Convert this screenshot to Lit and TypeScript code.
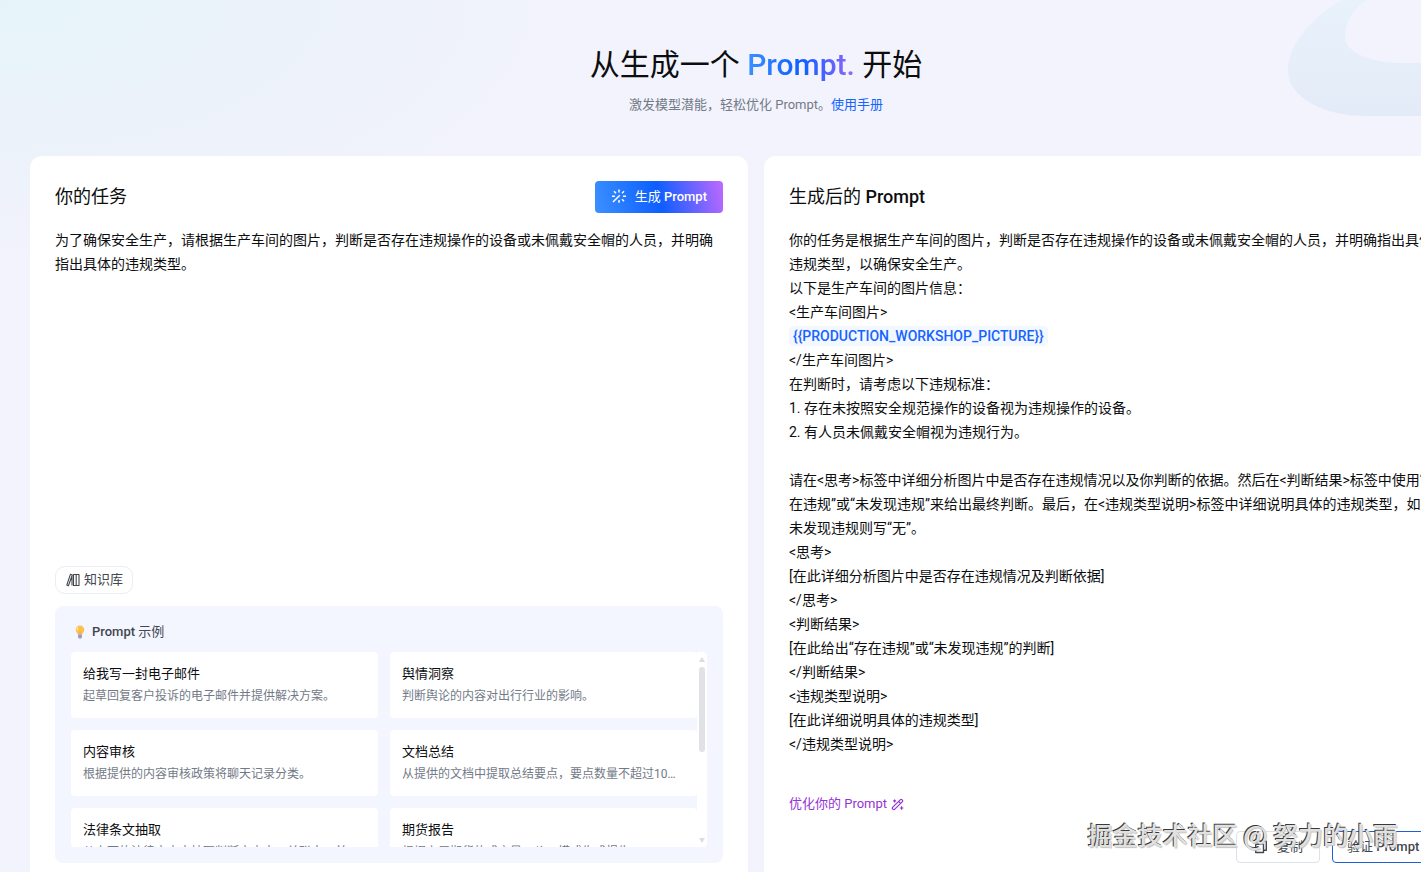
import { LitElement, html, css, svg } from "lit";
import { customElement, property } from "lit/decorators.js";

interface Example {
  title: string;
  desc: string;
}

const EXAMPLES: Example[] = [
  { title: "给我写一封电子邮件", desc: "起草回复客户投诉的电子邮件并提供解决方案。" },
  { title: "舆情洞察", desc: "判断舆论的内容对出行行业的影响。" },
  { title: "内容审核", desc: "根据提供的内容审核政策将聊天记录分类。" },
  { title: "文档总结", desc: "从提供的文档中提取总结要点，要点数量不超过10个，并按重要性排序。" },
  { title: "法律条文抽取", desc: "从上面的法律文本中抽取判断文本中，关联人，并列出" },
  { title: "期货报告", desc: "根据上周期货的成交量、价、模式生成报告" },
];

const TASK =
  "为了确保安全生产，请根据生产车间的图片，判断是否存在违规操作的设备或未佩戴安全帽的人员，并明确指出具体的违规类型。";

const BEFORE = `你的任务是根据生产车间的图片，判断是否存在违规操作的设备或未佩戴安全帽的人员，并明确指出具体的违规类型，以确保安全生产。
以下是生产车间的图片信息：
<生产车间图片>
`;

const AFTER = `
</生产车间图片>
在判断时，请考虑以下违规标准：
1. 存在未按照安全规范操作的设备视为违规操作的设备。
2. 有人员未佩戴安全帽视为违规行为。

请在<思考>标签中详细分析图片中是否存在违规情况以及你判断的依据。然后在<判断结果>标签中使用“存在违规”或“未发现违规”来给出最终判断。最后，在<违规类型说明>标签中详细说明具体的违规类型，如果未发现违规则写“无”。
<思考>
[在此详细分析图片中是否存在违规情况及判断依据]
</思考>
<判断结果>
[在此给出“存在违规”或“未发现违规”的判断]
</判断结果>
<违规类型说明>
[在此详细说明具体的违规类型]
</违规类型说明>`;

const sparkIcon = svg`<svg class="icon" width="16" height="16" viewBox="0 0 16 16" fill="none" stroke="currentColor" stroke-width="1.5">
  <path d="M2 13 8.800 6.200M8 .5v3M8 11v2.800M12 7.200h3M1 7.200h3M3 2.200l2 2M13 2.200l-2 2M11 10.200l2 2"/></svg>`;

const booksIcon = svg`<svg class="icon" width="14" height="14" viewBox="0 0 14 14" fill="none" stroke="currentColor" stroke-width="1.1" stroke-linejoin="round">
  <path d="M7.5 1.5h5.5v11H7.5zM10.2 1.5v11M4.4 1.3 .8 12.1l1.6.6L6.3 2zM6 3.4v9.1"/></svg>`;

const bulbIcon = svg`<svg class="icon" width="14" height="14" viewBox="0 0 14 14">
  <path d="M7 .4a4.300 4.300 0 0 0-4.300 4.300c0 1.900 1.300 2.700 1.900 4.200h4.800c.6-1.500 1.900-2.300 1.900-4.200A4.300 4.300 0 0 0 7 .4z" fill="#fbc04d"/>
  <path d="M5 2.400a2.800 2.800 0 0 0-.7 3" stroke="#fff0b8" stroke-width="1.1" fill="none"/>
  <path d="M7 6.400v2.500" stroke="#f39b3f" stroke-width="1" fill="none"/>
  <path d="M5 9.200h4v2.600a2 2 0 0 1-4 0z" fill="#a69bb5"/></svg>`;

const wandIcon = svg`<svg class="icon" width="14" height="14" viewBox="0 0 14 14" fill="none" stroke="currentColor" stroke-width="1.2" stroke-linejoin="round">
  <path d="M1.8 10.2 9.2 2.8a1.3 1.3 0 0 1 2 2L3.8 12.2a1.4 1.4 0 0 1-2-2zM7.6 4.4l2 2"/>
  <path d="M3.6 2.4v3M2.1 3.9h3M10.6 9.2v3.6M8.8 11h3.6"/></svg>`;

const copyIcon = svg`<svg class="icon" width="16" height="16" viewBox="0 0 16 16" fill="none" stroke="currentColor" stroke-width="1.4" stroke-linejoin="round">
  <path d="M2.700 5.200h7.800v8.300H2.700zM5.500 5V2.200h7.800v9h-2.600"/></svg>`;

const swooshArt = svg`<svg width="224" height="118" viewBox="0 0 224 118">
  <defs><linearGradient id="swoosh" x1="0" y1="0" x2="0" y2="1">
    <stop offset="0" stop-color="#e8f2fb"/><stop offset="1" stop-color="#e4ebf8"/></linearGradient></defs>
  <path fill="url(#swoosh)" d="M54 0C22 20 1 46 1 70c0 28 36 46 78 46h145V63H112C78 62 58 50 58 37 58 22 66 8 80 0z"/></svg>`;

@customElement("example-card")
export class ExampleCard extends LitElement {
  @property() heading = "";
  @property() desc = "";

  static styles = css`
    :host { display: block; min-width: 0; }
    .card {
      display: block;
      width: 100%;
      height: 66px;
      padding: 12px;
      border: 0;
      border-radius: 4px;
      background: #fff;
      font: inherit;
      text-align: left;
      cursor: pointer;
    }
    .card, .card * { box-sizing: border-box; }
    .title, .desc {
      display: block;
      overflow: hidden;
      white-space: nowrap;
      text-overflow: ellipsis;
    }
    .title { font-size: 13px; line-height: 20px; color: #0c0d0e; }
    .desc { font-size: 12px; line-height: 20px; margin-top: 2px; color: #737a87; }
  `;

  render() {
    return html`<button class="card" type="button">
      <span class="title">${this.heading}</span>
      <span class="desc">${this.desc}</span>
    </button>`;
  }
}

@customElement("app-root")
export class AppRoot extends LitElement {
  static styles = css`
    :host {
      display: block;
      position: relative;
      height: 100vh;
      overflow: hidden;
      font-family: Roboto, "Noto Sans CJK SC", sans-serif;
      color: #0c0d0e;
      background:
        radial-gradient(ellipse 560px 260px at 0 0, #e6f4fa 0%, #ebf2fa 45%, #f2f3fc 100%);
    }
    * { box-sizing: border-box; }
    .icon { display: block; flex: none; }
    a { color: #1664ff; text-decoration: none; }
    button { font-family: inherit; line-height: 20px; cursor: pointer; }

    .swoosh { position: absolute; top: 0; right: -90px; }

    .page {
      position: relative;
      display: flex;
      flex-direction: column;
      min-width: 1512px;
      padding: 44px 30px 0;
    }
    .hero { text-align: center; }
    .hero-title {
      margin: 0;
      font-size: 30px;
      line-height: 42px;
      font-weight: 400;
    }
    .brand {
      font-weight: 500;
      color: transparent;
      background: linear-gradient(90deg, #3b91ff 0%, #0d5eff 50%, #c069ff 115%);
      background-clip: text;
      -webkit-background-clip: text;
    }
    .hero-sub {
      margin: 9px 0 0;
      font-size: 13px;
      line-height: 20px;
      color: #737a87;
    }

    .columns {
      display: grid;
      grid-template-columns: 1fr 1fr;
      gap: 16px;
      margin-top: 41px;
    }
    .panel {
      display: flex;
      flex-direction: column;
      min-width: 0;
      padding: 25px;
      border-radius: 12px;
      background: #fff;
    }
    .panel-head {
      display: flex;
      align-items: center;
      justify-content: space-between;
      height: 32px;
      margin-bottom: 15px;
    }
    .panel-title { margin: 0; font-size: 18px; line-height: 28px; font-weight: 400; }
    .latin { font-weight: 500; }

    .generate {
      display: flex;
      align-items: center;
      gap: 8px;
      height: 32px;
      padding: 0 16px;
      border: 0;
      border-radius: 4px;
      color: #fff;
      font-size: 13px;
      font-weight: 400;
      background: linear-gradient(77deg, #3b91ff 0%, #0d5eff 50%, #c069ff 100%);
    }

    .task {
      display: block;
      width: 100%;
      height: 338px;
      padding: 0;
      border: 0;
      outline: 0;
      resize: none;
      overflow: hidden;
      color: inherit;
      background: transparent;
      font-family: inherit;
      font-size: 14px;
      line-height: 24px;
    }
    .knowledge {
      display: flex;
      align-items: center;
      align-self: flex-start;
      gap: 4px;
      height: 28px;
      padding: 0 9px 0 10px;
      border: 1px solid #eaedf1;
      border-radius: 10px;
      background: #fff;
      color: #42464e;
      font-size: 13px;
    }

    .examples {
      margin-top: 12px;
      padding: 16px;
      border-radius: 8px;
      background: #f3f6fe;
    }
    .examples-head {
      display: flex;
      align-items: center;
      gap: 5px;
      margin: 0 0 10px 2px;
      font-size: 13px;
      line-height: 20px;
      font-weight: 400;
      color: #42464e;
    }
    .examples-body {
      display: flex;
      height: 195px;
      overflow: hidden;
      border-radius: 4px;
    }
    .cards {
      flex: 1;
      display: grid;
      grid-template-columns: minmax(0, 1fr) minmax(0, 1fr);
      gap: 12px;
      align-content: start;
    }
    .track {
      display: flex;
      flex-direction: column;
      align-items: center;
      width: 10px;
      padding: 5px 0 4px;
      background: #fff;
    }
    .thumb { width: 6px; height: 85px; margin: 5px 0 auto; border-radius: 3px; background: #e1e2e5; }
    .arrow { border: 3px solid transparent; }
    .up { border-top: 0; border-bottom: 5px solid #dcdde1; }
    .down { border-bottom: 0; border-top: 5px solid #dcdde1; }

    .output {
      min-height: 528px;
      padding-right: 10px;
      font-size: 14px;
      line-height: 24px;
      white-space: pre-wrap;
    }
    .variable {
      padding: 2px 4px;
      border-radius: 4px;
      color: #1664ff;
      background: #f3f7ff;
      font-weight: 500;
    }
    .optimize {
      display: flex;
      align-items: center;
      align-self: flex-start;
      gap: 4px;
      margin-top: 37px;
      font-size: 13px;
      line-height: 22px;
      color: #9434d4;
    }
    .actions {
      display: flex;
      justify-content: flex-end;
      gap: 12px;
      margin-top: 16px;
    }
    .action {
      display: flex;
      align-items: center;
      justify-content: center;
      gap: 8px;
      height: 32px;
      padding: 0 16px;
      border: 1px solid #dde2e9;
      border-radius: 4px;
      background: #fff;
      color: #42464e;
      font-size: 13px;
    }
    .verify { min-width: 125px; justify-content: flex-start; padding: 0 14px; border-color: #1f5fd6; }

    .watermark {
      position: absolute;
      right: 23px;
      bottom: 20px;
      margin: 0;
      font-family: "Noto Sans CJK SC", sans-serif;
      font-size: 25px;
      line-height: 36px;
      font-weight: 500;
      white-space: nowrap;
      color: #e0e0e0;
      text-shadow: -1px -1px 0 #3a3a3a, 1px 1px 1px #c4c4c4;
      pointer-events: none;
    }
  `;

  render() {
    return html`
      <div class="swoosh">${swooshArt}</div>
      <main class="page">
        <header class="hero">
          <h1 class="hero-title">从生成一个 <span class="brand">Prompt.</span> 开始</h1>
          <p class="hero-sub">激发模型潜能，轻松优化 Prompt。<a href="#manual">使用手册</a></p>
        </header>
        <div class="columns">
          <section class="panel">
            <div class="panel-head">
              <h2 class="panel-title"><label for="task">你的任务</label></h2>
              <button class="generate" type="button">${sparkIcon}<span>生成 <span class="latin">Prompt</span></span></button>
            </div>
            <textarea class="task" id="task" spellcheck="false" .value=${TASK}></textarea>
            <button class="knowledge" type="button">${booksIcon}<span>知识库</span></button>
            <div class="examples">
              <h3 class="examples-head">${bulbIcon}<span><span class="latin">Prompt</span> 示例</span></h3>
              <div class="examples-body">
                <div class="cards">
                  ${EXAMPLES.map((e) => html`<example-card .heading=${e.title} .desc=${e.desc}></example-card>`)}
                </div>
                <div class="track" aria-hidden="true">
                  <i class="arrow up"></i><i class="thumb"></i><i class="arrow down"></i>
                </div>
              </div>
            </div>
          </section>
          <section class="panel">
            <div class="panel-head">
              <h2 class="panel-title">生成后的 <span class="latin">Prompt</span></h2>
            </div>
            <div class="output">${BEFORE}<span class="variable">{{PRODUCTION_WORKSHOP_PICTURE}}</span>${AFTER}</div>
            <a class="optimize" href="#optimize"><span>优化你的 Prompt</span>${wandIcon}</a>
            <div class="actions">
              <button class="action" type="button">${copyIcon}<span>复制</span></button>
              <button class="action verify" type="button"><span>验证 <span class="latin">Prompt</span></span></button>
            </div>
          </section>
        </div>
      </main>
      <p class="watermark">掘金技术社区 @ 努力的小雨</p>
    `;
  }
}
